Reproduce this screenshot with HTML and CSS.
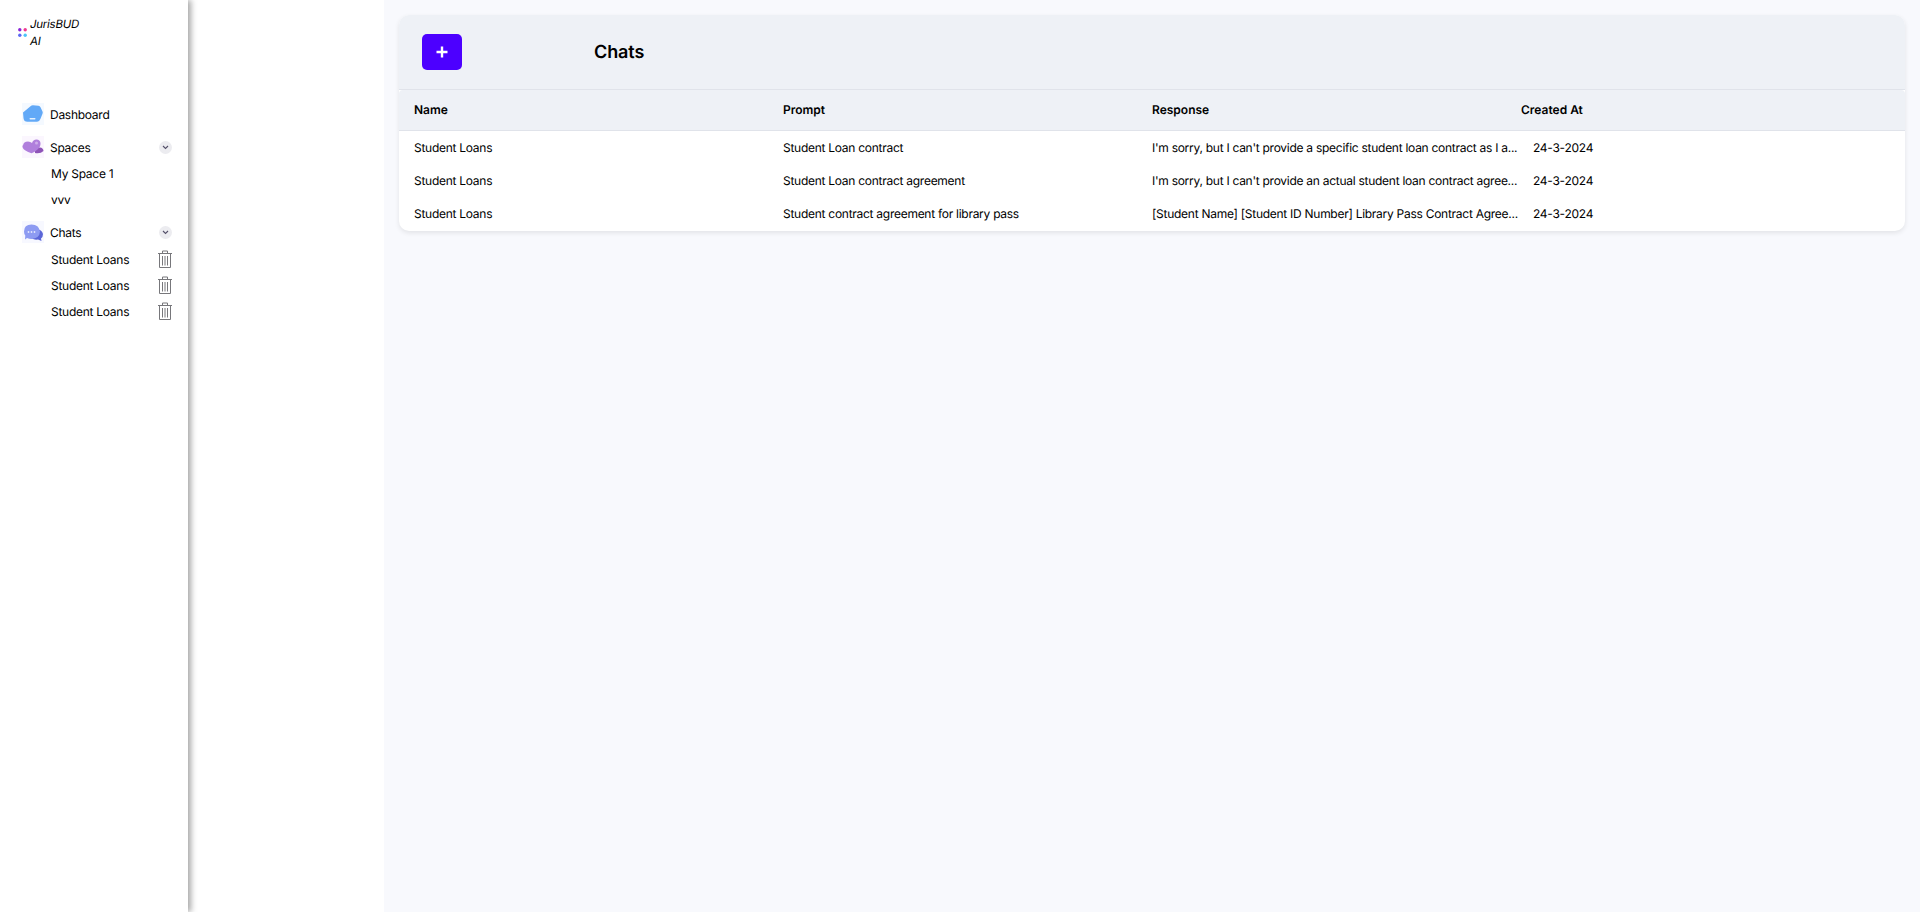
FILE: index.html
```html
<!DOCTYPE html>
<html lang="en">
<head>
    <meta charset="UTF-8">
    <meta name="viewport" content="width=device-width, initial-scale=1.0">
    <title>JurisBUD AI - Chats</title>
    <link rel="stylesheet" href="styles.css">
</head>
<body>
    <aside class="sidebar">
        <div class="brand">
            <svg class="brand-logo" width="9" height="9" viewBox="0 0 9 9">
                <circle cx="1.8" cy="1.8" r="1.7" fill="#8a22d8"/>
                <circle cx="7.2" cy="1.8" r="1.7" fill="#f0388f"/>
                <circle cx="1.8" cy="7.2" r="1.7" fill="#5a68f5"/>
                <circle cx="7.2" cy="7.2" r="1.7" fill="#4cc4f8"/>
            </svg>
            <span class="brand-name">JurisBUD AI</span>
        </div>

        <nav class="nav">
            <div class="nav-group">
                <a class="nav-item">
                    <svg class="nav-icon icon-blue" width="22" height="22" viewBox="0 0 22 22">
                        <path d="M1 9.500 8.500 3.200q1-.9 2.400-.9l5.600.5q1.400.1 2 1.400l2 4.400q.5 1 0 2.100l-2 5q-.8 2.600-3.400 3.100H5.500q-3.600 0-4-3.600z" fill="#62a9f7"/>
                        <rect x="7.500" y="15" width="6" height="1.400" rx=".7" fill="#e4f0fd"/>
                    </svg>
                    <span>Dashboard</span>
                </a>
            </div>

            <div class="nav-group">
                <a class="nav-item">
                    <svg class="nav-icon icon-purple" width="22" height="22" viewBox="0 0 22 22">
                        <path d="M13 15q1.500-3.500 5-3.500 3 0 3.500 3.500-3 3-8.500 2z" fill="#8f54b8"/>
                        <path d="M1 9.500Q1.500 5.500 6 5.500q2.500 0 4 1.500 1-3.500 4.500-3.500 3.500.2 4 3.500.3 3.500-3 6.500-3 2.800-6 3.800-3.500-1-6.500-3-3-2-2.500-4.800z" fill="#b07fdc"/>
                        <circle cx="14.500" cy="7" r="1.500" fill="#cfaeea"/>
                    </svg>
                    <span>Spaces</span>
                    <span class="chevron">
                        <svg width="7" height="5" viewBox="0 0 7 5"><path d="M1 1l2.500 2.500L6 1" fill="none" stroke="#55516a" stroke-width="1.100"/></svg>
                    </span>
                </a>
                <a class="sub-item">My Space 1</a>
                <a class="sub-item">vvv</a>
            </div>

            <div class="nav-group">
                <a class="nav-item">
                    <svg class="nav-icon icon-indigo" width="22" height="22" viewBox="0 0 22 22">
                        <path d="M14 8q6 .5 7 5 0 3-2 4.500l.5 2.500-3.500-1.500q-4 .5-6-1z" fill="#5b66d8"/>
                        <path d="M2 10.500Q2 3.500 9.500 3.500 17 3.500 18 10.500 17.500 17.500 9.500 18 7 18 5 17L3 18.500l.3-4Q2 13 2 10.500z" fill="#8d9bf2"/>
                        <circle cx="6.500" cy="11" r=".9" fill="#e3e7fd"/>
                        <circle cx="9.500" cy="11" r=".9" fill="#e3e7fd"/>
                        <circle cx="12.500" cy="11" r=".9" fill="#e3e7fd"/>
                    </svg>
                    <span>Chats</span>
                    <span class="chevron">
                        <svg width="7" height="5" viewBox="0 0 7 5"><path d="M1 1l2.500 2.500L6 1" fill="none" stroke="#55516a" stroke-width="1.100"/></svg>
                    </span>
                </a>
                <a class="sub-item">Student Loans
                    <svg class="trash" width="16" height="18" viewBox="0 0 16 18">
                        <path d="M1 3.500h14M5.500 3.300V1h5v2.300M2.500 3.700v13.800h11V3.700M5.500 6v9.500M8 6v9.500M10.500 6v9.500" fill="none" stroke="#77777b" stroke-width="1"/>
                    </svg>
                </a>
                <a class="sub-item">Student Loans
                    <svg class="trash" width="16" height="18" viewBox="0 0 16 18">
                        <path d="M1 3.500h14M5.500 3.300V1h5v2.300M2.500 3.700v13.800h11V3.700M5.500 6v9.500M8 6v9.500M10.500 6v9.500" fill="none" stroke="#77777b" stroke-width="1"/>
                    </svg>
                </a>
                <a class="sub-item">Student Loans
                    <svg class="trash" width="16" height="18" viewBox="0 0 16 18">
                        <path d="M1 3.500h14M5.500 3.300V1h5v2.300M2.500 3.700v13.800h11V3.700M5.500 6v9.500M8 6v9.500M10.500 6v9.500" fill="none" stroke="#77777b" stroke-width="1"/>
                    </svg>
                </a>
            </div>
        </nav>
    </aside>

    <div class="gutter"></div>

    <main class="main">
        <section class="card">
            <header class="card-header">
                <button class="add-btn">
                    <svg width="12" height="12" viewBox="0 0 12 12"><path d="M6 0.500v11M0.500 6h11" stroke="#fff" stroke-width="2.400"/></svg>
                </button>
                <h1>Chats</h1>
            </header>

            <table class="chat-table">
                <thead>
                    <tr>
                        <th>Name</th>
                        <th>Prompt</th>
                        <th>Response</th>
                        <th>Created At</th>
                    </tr>
                </thead>
                <tbody>
                    <tr>
                        <td>Student Loans</td>
                        <td>Student Loan contract</td>
                        <td class="response">I'm sorry, but I can't provide a specific student loan contract as I a...</td>
                        <td class="date">24-3-2024</td>
                    </tr>
                    <tr>
                        <td>Student Loans</td>
                        <td>Student Loan contract agreement</td>
                        <td class="response">I'm sorry, but I can't provide an actual student loan contract agree...</td>
                        <td class="date">24-3-2024</td>
                    </tr>
                    <tr>
                        <td>Student Loans</td>
                        <td>Student contract agreement for library pass</td>
                        <td class="response">[Student Name] [Student ID Number] Library Pass Contract Agree...</td>
                        <td class="date">24-3-2024</td>
                    </tr>
                </tbody>
            </table>
        </section>
    </main>
</body>
</html>
```

FILE: styles.css
```css
* {
    box-sizing: border-box;
}

body {
    font-family: Inter, 'Noto Sans', sans-serif;
    font-size: 12px;
    letter-spacing: -0.27px;
    text-rendering: geometricPrecision;
    margin: 0;
    height: 912px;
    overflow: hidden;
    display: flex;
    background: #fff;
    color: #000;
}

.sidebar {
    width: 188px;
    flex-shrink: 0;
    background: #fff;
    box-shadow: 3px 0 6px rgba(0, 0, 0, 0.35);
    position: relative;
    padding: 15px 15px 0 18px;
}

.brand {
    display: flex;
    align-items: center;
    gap: 3px;
    height: 35px;
}

.brand-logo {
    flex-shrink: 0;
}

.brand-name {
    width: 60px;
    font-size: 11.500px;
    font-style: italic;
    line-height: 17px;
}

.nav {
    margin-top: 51px;
    margin-left: 4px;
    display: flex;
    flex-direction: column;
    gap: 7px;
}

.nav-item {
    display: flex;
    align-items: center;
    height: 26px;
    gap: 6px;
}

.nav-group:last-child .nav-item {
    margin-bottom: 1px;
}

.nav-icon {
    flex-shrink: 0;
}

.icon-blue {
    background: #f4f9ff;
}

.icon-purple {
    background: #fbf6fe;
}

.icon-indigo {
    background: #f7f8ff;
}

.chevron {
    width: 13px;
    height: 13px;
    margin-left: auto;
    margin-right: 1px;
    border-radius: 50%;
    background: #ececf0;
    display: flex;
    align-items: center;
    justify-content: center;
}

.sub-item {
    display: flex;
    align-items: center;
    justify-content: space-between;
    height: 26px;
    padding-left: 29px;
}

.trash {
    flex-shrink: 0;
}

.gutter {
    width: 196px;
    flex-shrink: 0;
}

.main {
    flex: 1;
    background: #f8f9fd;
    padding: 15px 15px 0;
}

.card {
    background: #fff;
    border-radius: 10px;
    overflow: hidden;
    padding-bottom: 1px;
    box-shadow: 0 2px 5px rgba(0, 0, 0, 0.09);
}

.card-header {
    display: flex;
    align-items: center;
    height: 75px;
    padding: 0 23px;
    background: #eef1f6;
    border-bottom: 1px solid #e0e3ea;
}

.add-btn {
    width: 40px;
    height: 36px;
    padding: 0;
    border: none;
    border-radius: 5px;
    background: #4c00ff;
    display: flex;
    align-items: center;
    justify-content: center;
}

.card-header h1 {
    font-size: 18px;
    font-weight: 600;
    letter-spacing: -0.1px;
    margin: 0 0 0 132px;
}

.chat-table {
    width: 100%;
    border-collapse: separate;
    border-spacing: 0;
    table-layout: fixed;
}

.chat-table th {
    height: 41px;
    padding: 0 0 2px 15px;
    text-align: left;
    font-weight: 600;
    letter-spacing: 0;
    background: #eef1f6;
    border-bottom: 1px solid #e0e3ea;
}

.chat-table th:first-child {
    border-top-left-radius: 4px;
}

.chat-table th:last-child {
    border-top-right-radius: 4px;
    padding-left: 0;
}

.chat-table td {
    height: 33px;
    padding: 0 0 0 15px;
}

.chat-table th:nth-child(-n+2) {
    width: 369px;
}

.chat-table th:nth-child(3) {
    width: 384px;
}

.chat-table td.response {
    white-space: nowrap;
}

.chat-table td.date {
    padding-left: 12px;
}
```
